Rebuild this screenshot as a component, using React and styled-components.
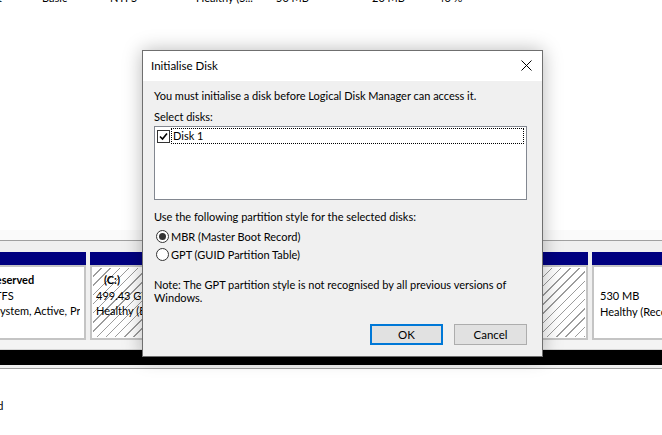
import React from "react";
import styled, { createGlobalStyle } from "styled-components";

const GlobalStyle = createGlobalStyle`
  html, body {
    margin: 0;
    padding: 0;
    background: #ffffff;
  }
  body {
    font-family: "Segoe UI", Lato, "Noto Sans", sans-serif;
    font-size: 11px;
    color: #000;
  }
`;

const Screen = styled.div`
  position: relative;
  width: 662px;
  height: 435px;
  overflow: hidden;
  background: #fff;
  display: flex;
  flex-direction: column;
`;

/* ---------- background: disk management window ---------- */

const VolumeList = styled.div`
  height: 230px;
  flex: none;
`;

const VolumeRow = styled.div`
  display: grid;
  grid-template-columns: 46px 68px 86px 80px 96px 66px 60px;
  margin: -10px 0 0 -4px;
  line-height: 15px;
  white-space: nowrap;
`;

const Band = styled.div`
  flex: none;
  height: ${(p) => p.$h}px;
  background: ${(p) => p.$bg || "#f0f0f0"};
  border-bottom: ${(p) => (p.$line ? `1px solid ${p.$line}` : "none")};
`;

const PartitionRow = styled.div`
  flex: none;
  display: flex;
  gap: 4px;
  height: 88px;
  background: #f0f0f0;
`;

const Partition = styled.div`
  display: flex;
  flex-direction: column;
  flex: none;
  width: ${(p) => p.$w}px;
  margin-left: ${(p) => p.$ml || 0}px;
`;

const PartitionHeader = styled.div`
  height: 13px;
  background: #000080;
`;

const PartitionFrame = styled.div`
  flex: 1;
  border: 2px solid #c4c4c4;
  display: flex;
  min-width: 0;
`;

const PartitionBody = styled.div`
  flex: 1;
  min-width: 0;
  border: 1px solid #ffffff;
  padding: ${(p) => p.$pad || "4px 0 0 5px"};
  line-height: 15.5px;
  white-space: nowrap;
  overflow: hidden;
  background: ${(p) =>
    p.$hatched
      ? "repeating-linear-gradient(135deg, #ffffff 0 5.5px, #9c9c9c 5.5px 6.5px)"
      : "#ffffff"};
`;

const PartitionText = styled.div`
  width: ${(p) => (p.$clip ? `${p.$clip}px` : "auto")};
  overflow: hidden;
  margin-left: ${(p) => p.$shift || 0}px;
`;

const Bold = styled.div`
  font-weight: 700;
  padding-left: ${(p) => p.$indent || 0}px;
`;

const BlackBar = styled.div`
  flex: none;
  height: 15px;
  background: #000;
`;

const LegendText = styled.div`
  margin: 30px 0 0 -54px;
  white-space: nowrap;
`;

/* ---------- dialog ---------- */

const Dialog = styled.div`
  position: absolute;
  left: 142px;
  top: 50px;
  width: 399px;
  height: 305px;
  border: 1px solid #6f6f6f;
  background: #f0f0f0;
  box-shadow: 0 0 18px rgba(0, 0, 0, 0.28);
  display: flex;
  flex-direction: column;
`;

const TitleBar = styled.div`
  height: 30px;
  flex: none;
  background: #ffffff;
  display: flex;
  align-items: center;
  justify-content: space-between;
  padding: 0 10px 0 8px;
`;

const Title = styled.span`
  font-size: 11.5px;
  line-height: 15px;
  padding-bottom: 1px;
`;

const CloseButton = styled.div`
  width: 12px;
  height: 12px;
  display: flex;
  align-items: center;
  justify-content: center;
  margin-top: -1px;
`;

const Body = styled.div`
  flex: 1;
  display: flex;
  flex-direction: column;
  padding: 7px 15px 0 11px;
`;

const Text = styled.div`
  line-height: ${(p) => p.$lh || 15}px;
  margin-top: ${(p) => p.$mt || 0}px;
  white-space: ${(p) => (p.$wrap ? "normal" : "nowrap")};
  max-width: ${(p) => (p.$wrap ? "362px" : "none")};
`;

const ListBox = styled.div`
  margin-top: 2px;
  height: 71px;
  background: #ffffff;
  border: 1px solid #828790;
  padding: 1px 1px 0 1px;
`;

const ListItem = styled.div`
  display: flex;
  align-items: center;
  gap: 1px;
  height: 16px;
`;

const CheckBox = styled.div`
  width: 11px;
  height: 11px;
  border: 1px solid #333333;
  background: #fff;
  display: flex;
  align-items: center;
  justify-content: center;
  flex: none;
  margin-left: 1px;
`;

const FocusLabel = styled.div`
  flex: 1;
  height: 14px;
  line-height: 14px;
  border: 1px dotted #000;
  padding-left: 1px;
  margin-right: 1px;
`;

const RadioGroup = styled.div`
  display: flex;
  flex-direction: column;
  margin-top: 5px;
  gap: 3px;
`;

const RadioRow = styled.div`
  display: flex;
  align-items: center;
  gap: 2px;
  height: 15px;
  margin-left: 2px;
`;

const RadioCircle = styled.div`
  width: 11px;
  height: 11px;
  border: 1px solid #333333;
  border-radius: 50%;
  background: #fff;
  display: flex;
  align-items: center;
  justify-content: center;
  flex: none;
`;

const RadioDot = styled.div`
  width: 7px;
  height: 7px;
  border-radius: 50%;
  background: #333333;
`;

const ButtonRow = styled.div`
  display: flex;
  justify-content: flex-end;
  gap: 11px;
  margin-top: auto;
  margin-bottom: 11px;
`;

const Button = styled.div`
  width: ${(p) => (p.$default ? 69 : 71)}px;
  height: ${(p) => (p.$default ? 17 : 19)}px;
  background: #e1e1e1;
  border: ${(p) => (p.$default ? "2px solid #0078d7" : "1px solid #adadad")};
  display: flex;
  align-items: center;
  justify-content: center;
  font-size: 11.5px;
  line-height: 15px;
`;

export default function App() {
  return (
    <>
      <GlobalStyle />
      <Screen>
        <VolumeList>
          <VolumeRow>
            <span>1</span>
            <span>Basic</span>
            <span>NTFS</span>
            <span>Healthy (S...</span>
            <span>50 MB</span>
            <span>20 MB</span>
            <span>40 %</span>
          </VolumeRow>
        </VolumeList>

        <Band $h={10} $bg="#fafafa" $line="#a0a0a0" />
        <Band $h={11} $bg="#f0f0f0" />

        <PartitionRow>
          <Partition $w={140} $ml={-54}>
            <PartitionHeader />
            <PartitionFrame>
              <PartitionBody $pad="4px 3px 0 0">
                <PartitionText $shift={2}>
                  <Bold>System Reserved</Bold>
                  <div>50 MB NTFS</div>
                  <div>Healthy (System, Active, Primary Partition)</div>
                </PartitionText>
              </PartitionBody>
            </PartitionFrame>
          </Partition>
          <Partition $w={498}>
            <PartitionHeader />
            <PartitionFrame>
              <PartitionBody $hatched $pad="4px 0 0 3px">
                <PartitionText $clip={47}>
                  <Bold $indent={8}>(C:)</Bold>
                  <div>499.43 GB NTFS</div>
                  <div>Healthy (Boot, Page File, Crash Dump, Primary Partition)</div>
                </PartitionText>
              </PartitionBody>
            </PartitionFrame>
          </Partition>
          <Partition $w={120}>
            <PartitionHeader />
            <PartitionFrame>
              <PartitionBody $pad="20px 0 0 5px">
                <div>530 MB</div>
                <div>Healthy (Recovery Partition)</div>
              </PartitionBody>
            </PartitionFrame>
          </Partition>
        </PartitionRow>

        <Band $h={9} $bg="#f4f4f4" $line="#d6d6d6" />
        <BlackBar />
        <Band $h={3} $bg="#f0f0f0" $line="#a0a0a0" />
        <LegendText>Unallocated</LegendText>

        <Dialog>
          <TitleBar>
            <Title>Initialise Disk</Title>
            <CloseButton>
              <svg width="11" height="11" viewBox="0 0 11 11">
                <path d="M0.5 0.5 L10.5 10.5 M10.5 0.5 L0.5 10.5" stroke="#000" strokeWidth="1" fill="none" />
              </svg>
            </CloseButton>
          </TitleBar>
          <Body>
            <Text>You must initialise a disk before Logical Disk Manager can access it.</Text>
            <Text $mt={6}>Select disks:</Text>
            <ListBox>
              <ListItem>
                <CheckBox>
                  <svg width="9" height="9" viewBox="0 0 9 9">
                    <path d="M1 4.5 L3.5 7 L8 1.5" stroke="#000" strokeWidth="1.6" fill="none" />
                  </svg>
                </CheckBox>
                <FocusLabel>Disk 1</FocusLabel>
              </ListItem>
            </ListBox>
            <Text $mt={9}>Use the following partition style for the selected disks:</Text>
            <RadioGroup>
              <RadioRow>
                <RadioCircle>
                  <RadioDot />
                </RadioCircle>
                <span>MBR (Master Boot Record)</span>
              </RadioRow>
              <RadioRow>
                <RadioCircle />
                <span>GPT (GUID Partition Table)</span>
              </RadioRow>
            </RadioGroup>
            <Text $mt={17} $lh={12.5} $wrap>
              Note: The GPT partition style is not recognised by all previous versions of Windows.
            </Text>
            <ButtonRow>
              <Button $default>OK</Button>
              <Button>Cancel</Button>
            </ButtonRow>
          </Body>
        </Dialog>
      </Screen>
    </>
  );
}
